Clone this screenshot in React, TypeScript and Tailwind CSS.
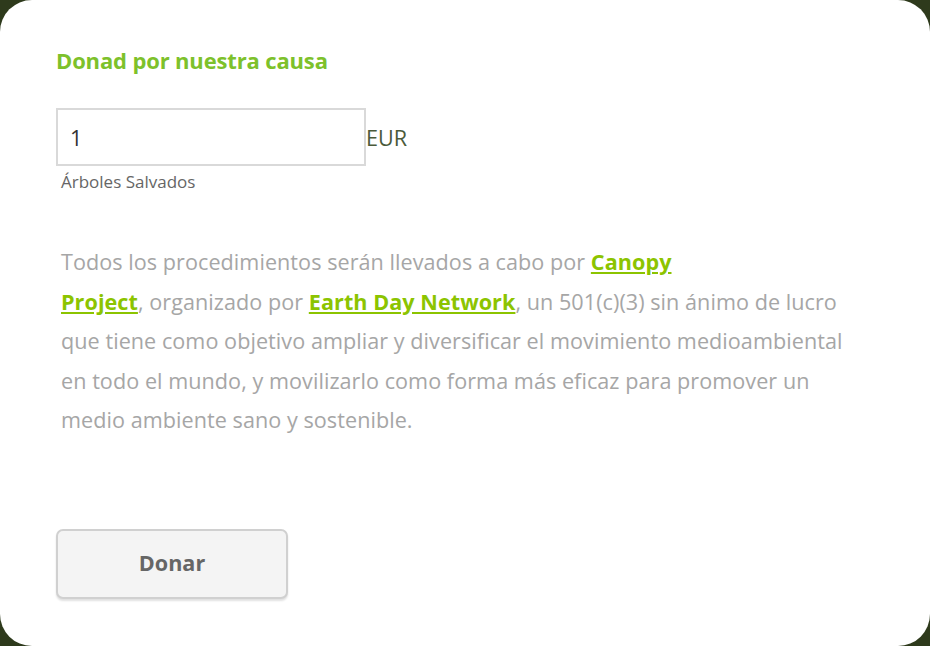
export default function App() {
  return (
    <div className="w-[930px] h-[646px] bg-[#2e3a1c] overflow-hidden" style={{ fontFamily: '"Open Sans", sans-serif' }}>
      <div className="w-full h-full bg-white rounded-[32px] pl-[56px] pt-[45px]">
        <h2 className="text-[22px] font-bold text-[#7dc12b] leading-[30px] tracking-[-0.15px]">Donad por nuestra causa</h2>
        <div className="mt-[33px] flex items-center">
          <div className="w-[310px] h-[58px] border-2 border-[#d9d9d9] flex items-center pl-[12px] pt-[2px] text-[21.6px] text-[#333]">1</div>
          <span className="text-[21.6px] text-[#4b5a3a] pt-[2px]">EUR</span>
        </div>
        <div className="mt-[4px] pl-[5px] text-[17px] text-[#666] leading-[24px]">Árboles Salvados</div>
        <p className="mt-[48px] pl-[5px] w-[800px] text-[21.6px] leading-[39.5px] text-[#a6a6a6] tracking-[0.05px]">
          Todos los procedimientos serán llevados a cabo por{" "}
          <a className="font-bold text-[#8cc400] underline">Canopy</a>
          <br />
          <a className="font-bold text-[#8cc400] underline">Project</a>, organizado por{" "}
          <a className="font-bold text-[#8cc400] underline">Earth Day Network</a>, un 501(c)(3) sin ánimo de lucro que tiene como objetivo ampliar y diversificar el movimiento medioambiental en todo el mundo, y movilizarlo como forma más eficaz para promover un medio ambiente sano y sostenible.
        </p>
        <button className="mt-[89px] w-[232px] h-[70px] rounded-[7px] border-2 border-[#d0d0d0] bg-[#f4f4f4] shadow-[0_2px_2px_rgba(0,0,0,0.12)] text-[21.6px] font-bold text-[#666]">
          Donar
        </button>
      </div>
    </div>
  );
}
